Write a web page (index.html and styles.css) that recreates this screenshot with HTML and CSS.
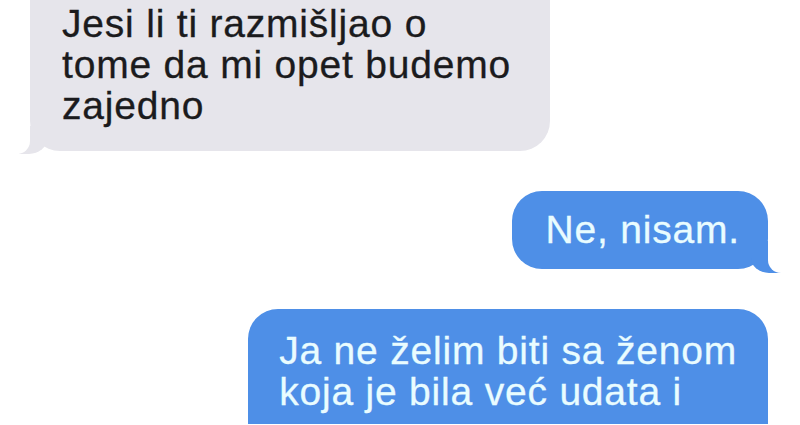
FILE: index.html
```html
<!DOCTYPE html>
<html lang="hr">
<head>
<meta charset="utf-8">
<title>Poruke</title>
<link rel="stylesheet" href="styles.css">
</head>
<body>
  <main class="thread">
    <div class="bubble received">Jesi li ti razmišljao o<br>tome da mi opet budemo<br>zajedno</div>
    <div class="bubble sent short">Ne, nisam.</div>
    <div class="bubble sent long no-tail">Ja ne želim biti sa ženom<br>koja je bila već udata i</div>
  </main>
</body>
</html>
```

FILE: styles.css
```css
html, body {
  margin: 0;
  padding: 0;
  background: #ffffff;
  overflow: hidden;
}

.thread {
  width: 800px;
  height: 425px;
  overflow: hidden;
  display: flex;
  flex-direction: column;
  gap: 40px;
  font-family: "Liberation Sans", Arial, sans-serif;
  font-size: 39px;
  line-height: 41px;
  letter-spacing: 0.8px;
  -webkit-text-stroke: 0.3px currentColor;
}

.bubble {
  position: relative;
  flex: none;
  border-radius: 30px;
  white-space: nowrap;
}

/* incoming grey message, top of it scrolled off screen */
.received {
  align-self: flex-start;
  margin-left: 30px;
  margin-top: -30px;
  width: 456px;
  padding: 33px 32px 25px 32px;
  background: #e6e5eb;
  color: #1b1b1d;
}

.received::before {
  content: "";
  position: absolute;
  left: -11px;
  bottom: -3px;
  width: 28px;
  height: 28px;
  background: #e6e5eb;
  border-bottom-right-radius: 18px 15px;
}

.received::after {
  content: "";
  position: absolute;
  left: -30px;
  bottom: -3px;
  width: 30px;
  height: 30px;
  background: #ffffff;
  border-bottom-right-radius: 13px;
}

/* outgoing blue messages */
.sent {
  align-self: flex-end;
  margin-right: 32px;
  background: #4e8fe7;
  color: #e9fcff;
}

.short {
  padding: 18px 28px 19px 34px;
}

.long {
  padding: 21px 31px 12px 31px;
  border-bottom-left-radius: 0;
  border-bottom-right-radius: 0;
}

.sent::before {
  content: "";
  position: absolute;
  right: -13px;
  bottom: -4px;
  width: 30px;
  height: 32px;
  background: #4e8fe7;
  border-bottom-left-radius: 18px 15px;
}

.sent::after {
  content: "";
  position: absolute;
  right: -32px;
  bottom: -4px;
  width: 32px;
  height: 34px;
  background: #ffffff;
  border-bottom-left-radius: 13px;
}

.no-tail::before,
.no-tail::after {
  display: none;
}
```
